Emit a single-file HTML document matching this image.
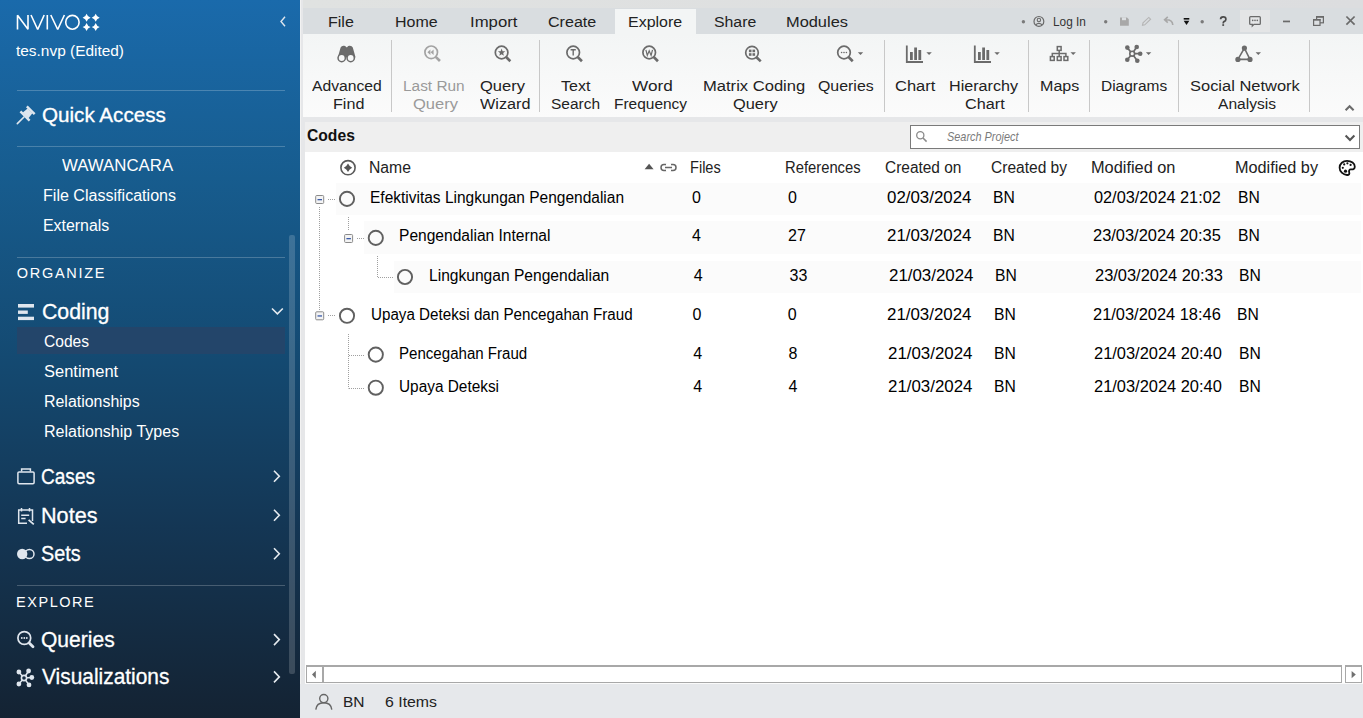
<!DOCTYPE html>
<html><head><meta charset="utf-8"><style>
html,body{margin:0;padding:0;width:1363px;height:718px;overflow:hidden;background:#e6e7e9;}
.t{position:absolute;white-space:nowrap;line-height:1;font-family:"Liberation Sans",sans-serif;transform-origin:0 0;}
.r{position:absolute;}
.s{position:absolute;overflow:visible;}
</style></head><body>
<div class="r" style="left:0px;top:0px;width:300px;height:718px;background:linear-gradient(180deg,#1a6aab 0px,#175c8e 178px,#144a72 355px,#143654 528px,#142435 705px,#142333 718px);"></div>
<div class="r" style="left:300px;top:0px;width:1063px;height:718px;background:#e6e7e9;"></div>
<div class="r" style="left:300px;top:0px;width:1px;height:718px;background:#f2f2f2;"></div>
<div class="r" style="left:303px;top:0px;width:1060px;height:8px;background:linear-gradient(90deg,#e0e2e1,#dcdddf);"></div>
<div class="r" style="left:303px;top:8px;width:1060px;height:26px;background:#d9dde0;"></div>
<div class="r" style="left:615px;top:9px;width:81px;height:25px;background:#f3f5f5;"></div>
<div class="r" style="left:1240px;top:10px;width:30px;height:22px;background:#e4e5e6;"></div>
<div class="r" style="left:303px;top:34px;width:1060px;height:83px;background:linear-gradient(180deg,#f3f5f5,#fbfbfb);"></div>
<div class="r" style="left:305px;top:122px;width:1058px;height:30px;background:#efefef;"></div>
<div class="r" style="left:305px;top:152px;width:1058px;height:513px;background:#ffffff;"></div>
<div class="r" style="left:17px;top:90px;width:268px;height:1px;background:rgba(255,255,255,0.22);"></div>
<div class="r" style="left:17px;top:146px;width:268px;height:1px;background:rgba(255,255,255,0.22);"></div>
<div class="r" style="left:17px;top:257px;width:268px;height:1px;background:rgba(255,255,255,0.22);"></div>
<div class="r" style="left:17px;top:585px;width:268px;height:1px;background:rgba(255,255,255,0.22);"></div>
<div class="r" style="left:17px;top:327px;width:268px;height:27px;background:#23456a;"></div>
<div class="r" style="left:289px;top:235px;width:6px;height:439px;background:rgba(255,255,255,0.17);border-radius:2px;"></div>
<div class="t" style="left:16.00px;top:44.32px;color:#ffffff;font-size:14.5px;transform:scaleX(1.0635);">tes.nvp (Edited)</div>
<div class="t" style="left:41.80px;top:106.29px;color:#ffffff;font-size:19.5px;transform:scaleX(1.0584);-webkit-text-stroke:0.3px #fff;">Quick Access</div>
<div class="t" style="left:61.80px;top:158.35px;color:#ffffff;font-size:16px;transform:scaleX(1.0508);">WAWANCARA</div>
<div class="t" style="left:43.00px;top:188.25px;color:#ffffff;font-size:16px;transform:scaleX(1.0042);">File Classifications</div>
<div class="t" style="left:43.00px;top:218.45px;color:#ffffff;font-size:16px;transform:scaleX(0.9928);">Externals</div>
<div class="t" style="left:16.80px;top:265.62px;color:#ffffff;font-size:14.5px;letter-spacing:1.705px;">ORGANIZE</div>
<div class="t" style="left:41.60px;top:301.80px;color:#ffffff;font-size:21.5px;transform:scaleX(0.9900);-webkit-text-stroke:0.3px #fff;">Coding</div>
<div class="t" style="left:43.60px;top:333.95px;color:#ffffff;font-size:16px;transform:scaleX(0.9737);">Codes</div>
<div class="t" style="left:43.60px;top:363.75px;color:#ffffff;font-size:16px;transform:scaleX(1.0299);">Sentiment</div>
<div class="t" style="left:43.60px;top:393.85px;color:#ffffff;font-size:16px;transform:scaleX(0.9953);">Relationships</div>
<div class="t" style="left:43.60px;top:423.65px;color:#ffffff;font-size:16px;transform:scaleX(1.0025);">Relationship Types</div>
<div class="t" style="left:41.40px;top:467.40px;color:#ffffff;font-size:21.5px;transform:scaleX(0.8863);-webkit-text-stroke:0.3px #fff;">Cases</div>
<div class="t" style="left:41.40px;top:505.60px;color:#ffffff;font-size:21.5px;transform:scaleX(1.0059);-webkit-text-stroke:0.3px #fff;">Notes</div>
<div class="t" style="left:41.40px;top:543.60px;color:#ffffff;font-size:21.5px;transform:scaleX(0.9223);-webkit-text-stroke:0.3px #fff;">Sets</div>
<div class="t" style="left:16.00px;top:595.42px;color:#ffffff;font-size:14.5px;letter-spacing:1.548px;">EXPLORE</div>
<div class="t" style="left:41.40px;top:630.40px;color:#ffffff;font-size:21.5px;transform:scaleX(0.9785);-webkit-text-stroke:0.3px #fff;">Queries</div>
<div class="t" style="left:42.40px;top:667.10px;color:#ffffff;font-size:21.5px;transform:scaleX(0.9723);-webkit-text-stroke:0.3px #fff;">Visualizations</div>
<svg class="s" style="left:0px;top:0px;" width="110" height="40" viewBox="0 0 110 40"><g fill="none" stroke="#fff" stroke-width="1.6" stroke-linejoin="bevel">
<path d="M17.5 29.5 V15.2 L28 29.2 V15"/>
<path d="M31 15 L37.7 29.5 L44.2 15"/>
<path d="M47.3 15 V29.5"/>
<path d="M50.8 15 L57.7 29.5 L64.4 15"/>
<ellipse cx="72.4" cy="22.3" rx="6.7" ry="6.9"/></g>
<g fill="#fff"><path d="M86.6 13.8 Q87.5 16.900000000000002 90.6 17.8 Q87.5 18.7 86.6 21.8 Q85.69999999999999 18.7 82.6 17.8 Q85.69999999999999 16.900000000000002 86.6 13.8Z"/><path d="M95.7 13.8 Q96.60000000000001 16.900000000000002 99.7 17.8 Q96.60000000000001 18.7 95.7 21.8 Q94.8 18.7 91.7 17.8 Q94.8 16.900000000000002 95.7 13.8Z"/><path d="M86.6 22.9 Q87.5 26.0 90.6 26.9 Q87.5 27.799999999999997 86.6 30.9 Q85.69999999999999 27.799999999999997 82.6 26.9 Q85.69999999999999 26.0 86.6 22.9Z"/><path d="M95.7 22.9 Q96.60000000000001 26.0 99.7 26.9 Q96.60000000000001 27.799999999999997 95.7 30.9 Q94.8 27.799999999999997 91.7 26.9 Q94.8 26.0 95.7 22.9Z"/></g></svg>
<svg class="s" style="left:270px;top:10px;" width="20" height="25" viewBox="0 0 20 25"><path d="M15 6.8 L11 11.5 L15 16.2" fill="none" stroke="#dfe6ee" stroke-width="1.4"/></svg>
<svg class="s" style="left:10px;top:100px;" width="30" height="30" viewBox="0 0 30 30"><g transform="translate(17,14) rotate(45)" fill="#dfe6ee">
<rect x="-5.5" y="-6.5" width="11" height="2.4"/>
<path d="M-3.4 -4.3 H3.4 L4 2 H-4Z"/>
<rect x="-6.5" y="1.6" width="13" height="2.4"/>
<rect x="-0.8" y="3.5" width="1.6" height="11" rx="0.8"/></g></svg>
<svg class="s" style="left:10px;top:298px;" width="30" height="28" viewBox="0 0 30 28"><g fill="#dfe6ee"><rect x="8" y="6" width="16" height="3.6"/><rect x="8" y="12.5" width="9.8" height="3.4"/><rect x="8" y="18.7" width="16" height="3.4"/></g></svg>
<svg class="s" style="left:265px;top:300px;" width="25" height="25" viewBox="0 0 25 25"><path d="M7 8.5 L12.4 13.8 L17.8 8.5" fill="none" stroke="#e6ebf0" stroke-width="1.6"/></svg>
<svg class="s" style="left:10px;top:462px;" width="30" height="30" viewBox="0 0 30 30"><g fill="none" stroke="#dfe6ee" stroke-width="1.5"><rect x="7.9" y="9.9" width="16.2" height="11.8" rx="1.2"/><path d="M11.6 9.6 V6.9 H20.4 V9.6"/></g></svg>
<svg class="s" style="left:10px;top:502px;" width="30" height="30" viewBox="0 0 30 30"><g fill="none" stroke="#dfe6ee" stroke-width="1.5"><path d="M22.5 19 V8 H8.7 V21.3 H17"/><path d="M11.5 6 V9.5 M19.5 6 V9.5"/><path d="M11.2 13.2 H19.2 M11.2 16.4 H15.6"/><path d="M18.6 17.8 L23.8 22.4" stroke-width="1.8"/></g></svg>
<svg class="s" style="left:10px;top:542px;" width="30" height="30" viewBox="0 0 30 30"><circle cx="19.4" cy="12" r="4.6" fill="none" stroke="#dfe6ee" stroke-width="1.5"/><circle cx="12.2" cy="12" r="5.2" fill="#dfe6ee"/></svg>
<svg class="s" style="left:10px;top:626px;" width="30" height="30" viewBox="0 0 30 30"><circle cx="14.3" cy="12" r="6.4" fill="none" stroke="#dfe6ee" stroke-width="1.7"/><path d="M19.2 17 L23 20.8" stroke="#dfe6ee" stroke-width="2.8" stroke-linecap="round"/><g fill="#dfe6ee"><circle cx="11.8" cy="12" r="0.9"/><circle cx="14.3" cy="12" r="0.9"/><circle cx="16.8" cy="12" r="0.9"/></g></svg>
<svg class="s" style="left:10px;top:662px;" width="30" height="30" viewBox="0 0 30 30"><g stroke="#dfe6ee" stroke-width="1.5" fill="none"><path d="M8.9 10 L14 16 M18.6 9 L14 16 M21.8 15.5 L14 16 M8.9 22 L14 16 M19 22.9 L14 16"/></g><circle cx="14" cy="16" r="2.6" fill="#142a40" stroke="#dfe6ee" stroke-width="1.6"/><g fill="#dfe6ee"><circle cx="8.9" cy="10" r="2.4"/><circle cx="18.6" cy="9" r="2.4"/><circle cx="21.8" cy="15.5" r="2.4"/><circle cx="8.9" cy="22" r="2.4"/><circle cx="19" cy="22.9" r="2.4"/></g></svg>
<svg class="s" style="left:265px;top:464px;" width="25" height="24" viewBox="0 0 25 24"><path d="M9 6.8 L14.3 12.3 L9 17.8" fill="none" stroke="#e6ebf0" stroke-width="1.6"/></svg>
<svg class="s" style="left:265px;top:503px;" width="25" height="24" viewBox="0 0 25 24"><path d="M9 6.8 L14.3 12.3 L9 17.8" fill="none" stroke="#e6ebf0" stroke-width="1.6"/></svg>
<svg class="s" style="left:265px;top:541px;" width="25" height="24" viewBox="0 0 25 24"><path d="M9 7.2 L14.3 12.7 L9 18.2" fill="none" stroke="#e6ebf0" stroke-width="1.6"/></svg>
<svg class="s" style="left:265px;top:627px;" width="25" height="24" viewBox="0 0 25 24"><path d="M9 7.1 L14.3 12.6 L9 18.1" fill="none" stroke="#e6ebf0" stroke-width="1.6"/></svg>
<svg class="s" style="left:265px;top:664px;" width="25" height="24" viewBox="0 0 25 24"><path d="M9 7.4 L14.3 12.9 L9 18.4" fill="none" stroke="#e6ebf0" stroke-width="1.6"/></svg>
<div class="t" style="left:327.50px;top:13.88px;color:#222222;font-size:15.5px;transform:scaleX(1.0345);">File</div>
<div class="t" style="left:395.40px;top:13.88px;color:#222222;font-size:15.5px;transform:scaleX(1.0304);">Home</div>
<div class="t" style="left:469.60px;top:13.88px;color:#222222;font-size:15.5px;transform:scaleX(1.0789);">Import</div>
<div class="t" style="left:548.20px;top:13.88px;color:#222222;font-size:15.5px;transform:scaleX(1.0378);">Create</div>
<div class="t" style="left:627.90px;top:13.88px;color:#222222;font-size:15.5px;transform:scaleX(1.0305);">Explore</div>
<div class="t" style="left:714.00px;top:13.88px;color:#222222;font-size:15.5px;transform:scaleX(1.0214);">Share</div>
<div class="t" style="left:785.90px;top:13.88px;color:#222222;font-size:15.5px;transform:scaleX(1.0571);">Modules</div>
<div class="t" style="left:1053.00px;top:16.22px;color:#333;font-size:12.5px;transform:scaleX(0.9467);">Log In</div>
<div class="t" style="left:311.80px;top:77.88px;color:#222222;font-size:15.5px;transform:scaleX(1.0125);">Advanced</div>
<div class="t" style="left:332.80px;top:96.38px;color:#222222;font-size:15.5px;transform:scaleX(1.0418);">Find</div>
<div class="t" style="left:403.20px;top:77.88px;color:#9a9a9a;font-size:15.5px;transform:scaleX(0.9935);">Last Run</div>
<div class="t" style="left:413.00px;top:96.38px;color:#9a9a9a;font-size:15.5px;transform:scaleX(1.0660);">Query</div>
<div class="t" style="left:480.40px;top:77.88px;color:#222222;font-size:15.5px;transform:scaleX(1.0660);">Query</div>
<div class="t" style="left:479.60px;top:96.38px;color:#222222;font-size:15.5px;transform:scaleX(1.0460);">Wizard</div>
<div class="t" style="left:560.60px;top:77.88px;color:#222222;font-size:15.5px;transform:scaleX(1.0344);">Text</div>
<div class="t" style="left:550.80px;top:96.38px;color:#222222;font-size:15.5px;transform:scaleX(0.9990);">Search</div>
<div class="t" style="left:631.60px;top:77.88px;color:#222222;font-size:15.5px;transform:scaleX(1.1069);">Word</div>
<div class="t" style="left:614.00px;top:96.38px;color:#222222;font-size:15.5px;transform:scaleX(0.9973);">Frequency</div>
<div class="t" style="left:703.00px;top:77.88px;color:#222222;font-size:15.5px;transform:scaleX(1.0691);">Matrix Coding</div>
<div class="t" style="left:733.40px;top:96.38px;color:#222222;font-size:15.5px;transform:scaleX(1.0568);">Query</div>
<div class="t" style="left:818.20px;top:77.88px;color:#222222;font-size:15.5px;transform:scaleX(1.0261);">Queries</div>
<div class="t" style="left:895.00px;top:77.88px;color:#222222;font-size:15.5px;transform:scaleX(1.0624);">Chart</div>
<div class="t" style="left:949.00px;top:77.88px;color:#222222;font-size:15.5px;transform:scaleX(1.0403);">Hierarchy</div>
<div class="t" style="left:965.40px;top:96.38px;color:#222222;font-size:15.5px;transform:scaleX(1.0460);">Chart</div>
<div class="t" style="left:1040.40px;top:77.88px;color:#222222;font-size:15.5px;transform:scaleX(1.0361);">Maps</div>
<div class="t" style="left:1101.00px;top:77.88px;color:#222222;font-size:15.5px;transform:scaleX(0.9985);">Diagrams</div>
<div class="t" style="left:1190.00px;top:77.88px;color:#222222;font-size:15.5px;transform:scaleX(1.0616);">Social Network</div>
<div class="t" style="left:1218.00px;top:96.38px;color:#222222;font-size:15.5px;transform:scaleX(1.0045);">Analysis</div>
<div class="r" style="left:391px;top:40px;width:1px;height:72px;background:#c8c8c8;"></div>
<div class="r" style="left:539px;top:40px;width:1px;height:72px;background:#c8c8c8;"></div>
<div class="r" style="left:884px;top:40px;width:1px;height:72px;background:#c8c8c8;"></div>
<div class="r" style="left:1028px;top:40px;width:1px;height:72px;background:#c8c8c8;"></div>
<div class="r" style="left:1089px;top:40px;width:1px;height:72px;background:#c8c8c8;"></div>
<div class="r" style="left:1178px;top:40px;width:1px;height:72px;background:#c8c8c8;"></div>
<div class="r" style="left:1309px;top:40px;width:1px;height:72px;background:#c8c8c8;"></div>
<svg class="s" style="left:0px;top:0px;" width="1363" height="120" viewBox="0 0 1363 120"><g fill="#6b6b6b"><path d="M337.8 57.5 L340.6 47.6 Q341.6 45.4 344 45.7 Q345.4 45.9 345.9 46.8 Q346.7 47.8 347.5 46.8 Q348 45.9 349.4 45.7 Q351.8 45.4 352.8 47.6 L355.6 57.5Z"/>
<circle cx="341.7" cy="58" r="4.4"/><circle cx="350.7" cy="58" r="4.4"/></g>
<g fill="#f6f7f7"><circle cx="341.7" cy="58" r="2.9"/><circle cx="350.7" cy="58" r="2.9"/></g><circle cx="431.2" cy="52.3" r="6.3" fill="none" stroke="#a3a3a3" stroke-width="1.7"/><path d="M435.74 56.84 L439.94 61.04" stroke="#a3a3a3" stroke-width="2.6" stroke-linecap="butt"/><path d="M427.4 52.3 L430.4 49.6 V55Z M430.6 52.3 L433.6 49.6 V55Z" fill="#a3a3a3"/><circle cx="501.6" cy="52.5" r="6.3" fill="none" stroke="#6b6b6b" stroke-width="1.7"/><path d="M506.14 57.04 L510.34 61.24" stroke="#6b6b6b" stroke-width="2.6" stroke-linecap="butt"/><path d="M501.6 48.6 L502.6 51.2 L505.3 51.3 L503.2 53 L503.9 55.7 L501.6 54.2 L499.3 55.7 L500 53 L497.9 51.3 L500.6 51.2Z" fill="#6b6b6b"/><circle cx="573.2" cy="52.5" r="6.3" fill="none" stroke="#6b6b6b" stroke-width="1.7"/><path d="M577.74 57.04 L581.94 61.24" stroke="#6b6b6b" stroke-width="2.6" stroke-linecap="butt"/><path d="M570.6 49.8 H575.8 M573.2 49.8 V55.6" stroke="#6b6b6b" stroke-width="1.4" fill="none"/><circle cx="649.2" cy="52.5" r="6.3" fill="none" stroke="#6b6b6b" stroke-width="1.7"/><path d="M653.74 57.04 L657.94 61.24" stroke="#6b6b6b" stroke-width="2.6" stroke-linecap="butt"/><path d="M645.9 49.8 L647.3 55.4 L649.2 50.8 L651.1 55.4 L652.5 49.8" stroke="#6b6b6b" stroke-width="1.2" fill="none"/><circle cx="752" cy="52.7" r="6.3" fill="none" stroke="#6b6b6b" stroke-width="1.7"/><path d="M756.54 57.24 L760.74 61.44" stroke="#6b6b6b" stroke-width="2.6" stroke-linecap="butt"/><g fill="#6b6b6b"><rect x="748.9" y="49.6" width="2.6" height="2.6"/><rect x="752.5" y="49.6" width="2.6" height="2.6"/><rect x="748.9" y="53.2" width="2.6" height="2.6"/><rect x="752.5" y="53.2" width="2.6" height="2.6"/></g><circle cx="844" cy="52.5" r="6.3" fill="none" stroke="#6b6b6b" stroke-width="1.7"/><path d="M848.54 57.04 L852.74 61.24" stroke="#6b6b6b" stroke-width="2.6" stroke-linecap="butt"/><g fill="#6b6b6b"><circle cx="841.6" cy="52.5" r="0.8"/><circle cx="844" cy="52.5" r="0.8"/><circle cx="846.4" cy="52.5" r="0.8"/></g><path d="M857.8 52.3 H863.1999999999999 L860.5 55.099999999999994Z" fill="#6b6b6b"/><path d="M906.8 45.5 V62 H923" fill="none" stroke="#6b6b6b" stroke-width="1.8"/><g fill="#6b6b6b"><rect x="910" y="52" width="2.8" height="8"/><rect x="914.2" y="47.5" width="2.8" height="12.5"/><rect x="918.4" y="50" width="2.8" height="10"/></g><path d="M926.4 52.3 H931.8 L929.1 55.099999999999994Z" fill="#6b6b6b"/><path d="M974.8 45.5 V62 H991" fill="none" stroke="#6b6b6b" stroke-width="1.8"/><g fill="#6b6b6b"><rect x="978" y="52" width="2.8" height="8"/><rect x="982.2" y="47.5" width="2.8" height="12.5"/><rect x="986.4" y="50" width="2.8" height="10"/></g><path d="M994.4 52.3 H999.8 L997.1 55.099999999999994Z" fill="#6b6b6b"/><g fill="none" stroke="#6b6b6b" stroke-width="1.5"><rect x="1057.3" y="46.6" width="3.8" height="3.8"/><rect x="1050.4" y="56.6" width="3.8" height="3.8"/><rect x="1057.3" y="56.6" width="3.8" height="3.8"/><rect x="1064" y="56.6" width="3.8" height="3.8"/>
<path d="M1059.2 50.4 V56.6 M1052.3 56.6 V53.5 H1065.9 V56.6"/></g><path d="M1070.5 52.2 H1075.9 L1073.2 55.0Z" fill="#6b6b6b"/><g stroke="#6b6b6b" stroke-width="1.7"><path d="M1127.3 47.6 L1132.2 53.7 M1136.7 47 L1132.2 53.7 M1140.2 53.7 L1132.2 53.7 M1127.3 59.7 L1132.2 53.7 M1137.3 60.7 L1132.2 53.7"/></g>
<g fill="#6b6b6b"><circle cx="1127.3" cy="47.6" r="2.3"/><circle cx="1136.7" cy="47" r="2.3"/><circle cx="1140.2" cy="53.7" r="2.3"/><circle cx="1127.3" cy="59.7" r="2.3"/><circle cx="1137.3" cy="60.7" r="2.3"/></g>
<circle cx="1132.2" cy="53.7" r="2.4" fill="#f6f7f7" stroke="#6b6b6b" stroke-width="1.6"/><path d="M1145.9 52.2 H1151.3000000000002 L1148.6000000000001 55.0Z" fill="#6b6b6b"/><path d="M1244.4 48.1 L1237.9 59.4 H1250Z" fill="none" stroke="#6b6b6b" stroke-width="1.6"/><g fill="#6b6b6b"><circle cx="1244.4" cy="48.1" r="2.6"/><circle cx="1237.9" cy="59.4" r="2.6"/><circle cx="1250" cy="59.4" r="2.6"/></g><path d="M1255.6 52.2 H1261.0 L1258.3 55.0Z" fill="#6b6b6b"/><path d="M1345.6 110.2 L1349.6 106.2 L1353.6 110.2" fill="none" stroke="#6b6b6b" stroke-width="2.1"/><g fill="#7a7a7a"><circle cx="1023.4" cy="21.7" r="1.7"/><circle cx="1105.7" cy="21.7" r="1.7"/><circle cx="1202.2" cy="21.7" r="1.7"/></g>
<circle cx="1038.9" cy="21.4" r="4.9" fill="none" stroke="#6a6a6a" stroke-width="1.2"/><circle cx="1038.9" cy="20" r="1.7" fill="none" stroke="#6a6a6a" stroke-width="1.1"/><path d="M1035.6 25 Q1038.9 21.8 1042.2 25" fill="none" stroke="#6a6a6a" stroke-width="1.1"/>
<path d="M1120 17.4 H1127 L1128.8 19.2 V25.8 H1120Z" fill="#a8a8a8"/><rect x="1122" y="17.4" width="4" height="2.8" fill="#dcdfe2"/>
<path d="M1142.5 25.3 L1143 22.8 L1148.8 17.4 L1150.6 19.2 L1144.8 24.8Z" fill="none" stroke="#b5b5b5" stroke-width="1.1"/>
<path d="M1172.8 25 Q1172.5 19.5 1165.5 19.8 M1167.8 16.9 L1164.6 19.8 L1167.8 22.6" fill="none" stroke="#a8a8a8" stroke-width="1.6"/>
<rect x="1183.7" y="18" width="5.6" height="1.6" fill="#111"/><path d="M1183.7 20.8 H1189.3 L1186.5 25Z" fill="#111"/>
<path d="M1220.6 19.3 Q1220.6 16.9 1223.2 16.9 Q1225.9 16.9 1225.9 19.2 Q1225.9 20.8 1224 21.6 Q1223.2 22 1223.2 23.4" fill="none" stroke="#4a4a4a" stroke-width="1.7"/><rect x="1222.3" y="24.2" width="1.8" height="1.7" fill="#4a4a4a"/>
<path d="M1250.6 16.6 H1259.4 Q1260.3 16.6 1260.3 17.5 V23.4 Q1260.3 24.3 1259.4 24.3 H1254 L1252.3 26 V24.3 H1250.6 Q1249.7 24.3 1249.7 23.4 V17.5 Q1249.7 16.6 1250.6 16.6Z" fill="none" stroke="#6a6a6a" stroke-width="1.3"/>
<g fill="#6a6a6a"><circle cx="1252.7" cy="20.4" r="0.8"/><circle cx="1255" cy="20.4" r="0.8"/><circle cx="1257.3" cy="20.4" r="0.8"/></g>
<rect x="1283" y="20.6" width="7" height="1.7" fill="#6a6a6a"/>
<g fill="none" stroke="#6a6a6a" stroke-width="1.2"><rect x="1316.6" y="16.7" width="6.8" height="6.1"/><rect x="1313.6" y="19.6" width="6.4" height="5.8" fill="#dcdfe2"/></g><rect x="1316" y="16.1" width="8" height="1.6" fill="#6a6a6a"/><rect x="1313" y="19" width="7.6" height="1.6" fill="#6a6a6a"/>
<path d="M1346.4 16.5 L1354.6 24.7 M1354.6 16.5 L1346.4 24.7" stroke="#6a6a6a" stroke-width="1.7"/></svg>
<div class="t" style="left:307.20px;top:127.58px;color:#111;font-size:16.8px;font-weight:700;transform:scaleX(0.9326);">Codes</div>
<div class="r" style="left:910px;top:125px;width:450px;height:24px;background:#ffffff;box-sizing:border-box;border:1px solid #7a7a7a;"></div>
<div class="t" style="left:946.80px;top:130.19px;color:#7a7a7a;font-size:13px;font-style:italic;transform:scaleX(0.8378);">Search Project</div>
<div class="t" style="left:369.00px;top:160.45px;color:#222222;font-size:16px;transform:scaleX(0.9837);">Name</div>
<div class="t" style="left:689.60px;top:160.45px;color:#222222;font-size:16px;transform:scaleX(0.9100);">Files</div>
<div class="t" style="left:785.20px;top:160.45px;color:#222222;font-size:16px;transform:scaleX(0.9243);">References</div>
<div class="t" style="left:885.00px;top:160.45px;color:#222222;font-size:16px;transform:scaleX(0.9652);">Created on</div>
<div class="t" style="left:990.80px;top:160.45px;color:#222222;font-size:16px;transform:scaleX(0.9715);">Created by</div>
<div class="t" style="left:1091.20px;top:160.45px;color:#222222;font-size:16px;transform:scaleX(1.0208);">Modified on</div>
<div class="t" style="left:1235.00px;top:160.45px;color:#222222;font-size:16px;transform:scaleX(1.0143);">Modified by</div>
<div class="r" style="left:336px;top:183px;width:1025px;height:32px;background:#fbfbfb;"></div>
<div class="r" style="left:364px;top:221px;width:997px;height:33px;background:#fbfbfb;"></div>
<div class="r" style="left:394px;top:261px;width:967px;height:32px;background:#fbfbfb;"></div>
<div class="t" style="left:370.20px;top:190.25px;color:#000;font-size:16px;transform:scaleX(0.9680);">Efektivitas Lingkungan Pengendalian</div>
<div class="t" style="left:692.00px;top:190.25px;color:#000;font-size:16px;">0</div>
<div class="t" style="left:788.00px;top:190.25px;color:#000;font-size:16px;">0</div>
<div class="t" style="left:886.80px;top:190.25px;color:#000;font-size:16px;transform:scaleX(1.0544);">02/03/2024</div>
<div class="t" style="left:993.00px;top:190.25px;color:#000;font-size:16px;transform:scaleX(0.9796);">BN</div>
<div class="t" style="left:1093.80px;top:190.25px;color:#000;font-size:16px;transform:scaleX(1.0181);">02/03/2024 21:02</div>
<div class="t" style="left:1238.00px;top:190.25px;color:#000;font-size:16px;transform:scaleX(0.9796);">BN</div>
<div class="t" style="left:399.00px;top:227.95px;color:#000;font-size:16px;transform:scaleX(0.9727);">Pengendalian Internal</div>
<div class="t" style="left:692.00px;top:227.95px;color:#000;font-size:16px;">4</div>
<div class="t" style="left:788.00px;top:227.95px;color:#000;font-size:16px;">27</div>
<div class="t" style="left:887.00px;top:227.95px;color:#000;font-size:16px;transform:scaleX(1.0544);">21/03/2024</div>
<div class="t" style="left:993.00px;top:227.95px;color:#000;font-size:16px;transform:scaleX(0.9796);">BN</div>
<div class="t" style="left:1092.80px;top:227.95px;color:#000;font-size:16px;transform:scaleX(1.0262);">23/03/2024 20:35</div>
<div class="t" style="left:1238.00px;top:227.95px;color:#000;font-size:16px;transform:scaleX(0.9796);">BN</div>
<div class="t" style="left:429.00px;top:268.15px;color:#000;font-size:16px;transform:scaleX(0.9740);">Lingkungan Pengendalian</div>
<div class="t" style="left:693.80px;top:268.15px;color:#000;font-size:16px;">4</div>
<div class="t" style="left:789.60px;top:268.15px;color:#000;font-size:16px;">33</div>
<div class="t" style="left:889.00px;top:268.15px;color:#000;font-size:16px;transform:scaleX(1.0544);">21/03/2024</div>
<div class="t" style="left:994.80px;top:268.15px;color:#000;font-size:16px;transform:scaleX(0.9796);">BN</div>
<div class="t" style="left:1095.20px;top:268.15px;color:#000;font-size:16px;transform:scaleX(1.0262);">23/03/2024 20:33</div>
<div class="t" style="left:1239.40px;top:268.15px;color:#000;font-size:16px;transform:scaleX(0.9796);">BN</div>
<div class="t" style="left:371.00px;top:306.55px;color:#000;font-size:16px;transform:scaleX(0.9487);">Upaya Deteksi dan Pencegahan Fraud</div>
<div class="t" style="left:692.40px;top:306.55px;color:#000;font-size:16px;">0</div>
<div class="t" style="left:787.80px;top:306.55px;color:#000;font-size:16px;">0</div>
<div class="t" style="left:887.20px;top:306.55px;color:#000;font-size:16px;transform:scaleX(1.0544);">21/03/2024</div>
<div class="t" style="left:993.80px;top:306.55px;color:#000;font-size:16px;transform:scaleX(0.9796);">BN</div>
<div class="t" style="left:1093.20px;top:306.55px;color:#000;font-size:16px;transform:scaleX(1.0262);">21/03/2024 18:46</div>
<div class="t" style="left:1237.40px;top:306.55px;color:#000;font-size:16px;transform:scaleX(0.9796);">BN</div>
<div class="t" style="left:399.20px;top:346.45px;color:#000;font-size:16px;transform:scaleX(0.9423);">Pencegahan Fraud</div>
<div class="t" style="left:693.20px;top:346.45px;color:#000;font-size:16px;">4</div>
<div class="t" style="left:788.60px;top:346.45px;color:#000;font-size:16px;">8</div>
<div class="t" style="left:888.00px;top:346.45px;color:#000;font-size:16px;transform:scaleX(1.0544);">21/03/2024</div>
<div class="t" style="left:994.40px;top:346.45px;color:#000;font-size:16px;transform:scaleX(0.9796);">BN</div>
<div class="t" style="left:1094.00px;top:346.45px;color:#000;font-size:16px;transform:scaleX(1.0262);">21/03/2024 20:40</div>
<div class="t" style="left:1238.60px;top:346.45px;color:#000;font-size:16px;transform:scaleX(0.9796);">BN</div>
<div class="t" style="left:399.20px;top:378.55px;color:#000;font-size:16px;transform:scaleX(0.9612);">Upaya Deteksi</div>
<div class="t" style="left:693.20px;top:378.55px;color:#000;font-size:16px;">4</div>
<div class="t" style="left:788.60px;top:378.55px;color:#000;font-size:16px;">4</div>
<div class="t" style="left:888.00px;top:378.55px;color:#000;font-size:16px;transform:scaleX(1.0544);">21/03/2024</div>
<div class="t" style="left:994.40px;top:378.55px;color:#000;font-size:16px;transform:scaleX(0.9796);">BN</div>
<div class="t" style="left:1094.00px;top:378.55px;color:#000;font-size:16px;transform:scaleX(1.0262);">21/03/2024 20:40</div>
<div class="t" style="left:1238.60px;top:378.55px;color:#000;font-size:16px;transform:scaleX(0.9796);">BN</div>
<svg class="s" style="left:0px;top:0px;" width="1363" height="400" viewBox="0 0 1363 400"><circle cx="920.3" cy="135.3" r="3.6" fill="none" stroke="#8a8a8a" stroke-width="1.3"/><path d="M923 138 L926.6 141.6" stroke="#8a8a8a" stroke-width="1.5"/><path d="M1345.6 135.6 L1350 140 L1354.4 135.6" fill="none" stroke="#555" stroke-width="2.1"/><circle cx="348" cy="167.7" r="7.1" fill="none" stroke="#5a5a5a" stroke-width="1.6"/><path d="M348 163.5 Q349.3 166.39999999999998 352.2 167.7 Q349.3 169.0 348 171.89999999999998 Q346.7 169.0 343.8 167.7 Q346.7 166.39999999999998 348 163.5Z" fill="#555"/><path d="M644.6 169.3 L649.1 163.8 L653.6 169.3Z" fill="#555"/><g fill="none" stroke="#666" stroke-width="1.5"><rect x="661" y="164.5" width="7.5" height="6" rx="3"/><rect x="668.5" y="164.5" width="7.5" height="6" rx="3"/></g><rect x="666" y="163.5" width="5" height="8" fill="#fff"/><path d="M665 167.5 H672" stroke="#666" stroke-width="1.5"/><path d="M1347 160.8 C1351.5 160.8 1354.8 163.5 1354.8 166.8 C1354.8 168.8 1353.2 169.6 1351.2 169.4 C1349.4 169.2 1348.6 170.6 1349.2 172.2 C1349.8 174 1348.8 175.2 1347 175 C1343 174.8 1339.6 171.5 1339.6 167.7 C1339.6 163.8 1343 160.8 1347 160.8Z" fill="none" stroke="#111" stroke-width="1.8"/><g fill="#111"><circle cx="1342.8" cy="167.8" r="1.1"/><circle cx="1344.2" cy="164.4" r="1.1"/><circle cx="1347.4" cy="163.3" r="1.1"/><circle cx="1350.6" cy="164.9" r="1.1"/><circle cx="1345.5" cy="171.2" r="1.6"/></g><circle cx="347" cy="198.9" r="7.1" fill="none" stroke="#606060" stroke-width="1.9"/><circle cx="375.8" cy="237.9" r="7.1" fill="none" stroke="#606060" stroke-width="1.9"/><circle cx="405" cy="277" r="7.1" fill="none" stroke="#606060" stroke-width="1.9"/><circle cx="347" cy="315.8" r="7.1" fill="none" stroke="#606060" stroke-width="1.9"/><circle cx="375.8" cy="354.6" r="7.1" fill="none" stroke="#606060" stroke-width="1.9"/><circle cx="375.8" cy="387.7" r="7.1" fill="none" stroke="#606060" stroke-width="1.9"/><rect x="315.7" y="195.5" width="8" height="8" rx="1" fill="#f4f4f4" stroke="#8a8a8a" stroke-width="1"/><rect x="317.5" y="199" width="4.5" height="1.3" fill="#3a5aa8"/><rect x="344.6" y="234.5" width="8" height="8" rx="1" fill="#f4f4f4" stroke="#8a8a8a" stroke-width="1"/><rect x="346.40000000000003" y="238" width="4.5" height="1.3" fill="#3a5aa8"/><rect x="315.7" y="311.8" width="8" height="8" rx="1" fill="#f4f4f4" stroke="#8a8a8a" stroke-width="1"/><rect x="317.5" y="315.3" width="4.5" height="1.3" fill="#3a5aa8"/><path d="M328 199.5 H335 M319.5 207 V311 M348.5 217 V230 M357 238.5 H364 M377.5 256 V277.5 H394 M328 315.5 H335 M348.5 334 V388.5 M349 355.5 H364 M349 388.5 H364" stroke="#a0a0a0" stroke-width="1" stroke-dasharray="1 1" fill="none"/></svg>
<div class="r" style="left:305px;top:665px;width:1058px;height:19px;background:#ffffff;"></div>
<div class="r" style="left:322px;top:665px;width:1020px;height:18px;background:#ffffff;box-sizing:border-box;border:1px solid #a8a8a8;border-top:2px solid #a8a8a8;border-left:2px solid #a8a8a8;"></div>
<div class="r" style="left:306px;top:665px;width:17px;height:18px;background:#ffffff;box-sizing:border-box;border:1px solid #a8a8a8;border-top:2px solid #a8a8a8;"></div>
<div class="r" style="left:1345px;top:665px;width:17px;height:18px;background:#ffffff;box-sizing:border-box;border:1px solid #a8a8a8;border-top:2px solid #a8a8a8;"></div>
<div class="r" style="left:305px;top:683px;width:1058px;height:1px;background:#fafafa;"></div>
<div class="r" style="left:300px;top:684px;width:1063px;height:34px;background:#e6e8eb;"></div>
<svg class="s" style="left:300px;top:640px;" width="200" height="78" viewBox="0 0 200 78"><circle cx="23.8" cy="58.6" r="4.1" fill="none" stroke="#666" stroke-width="1.4"/><path d="M15.8 69.6 Q16.6 62.8 23.8 62.8 Q31 62.8 31.8 69.6" fill="none" stroke="#666" stroke-width="1.4"/><path d="M15.8 30.8 L12 34.6 L15.8 38.4Z" fill="#707070"/></svg>
<svg class="s" style="left:1300px;top:640px;" width="63" height="50" viewBox="0 0 63 50"><path d="M51.6 31 L55.8 34.6 L51.6 38.2Z" fill="#707070"/></svg>
<div class="t" style="left:343.00px;top:694.38px;color:#222222;font-size:15.5px;transform:scaleX(0.9999);">BN</div>
<div class="t" style="left:384.50px;top:694.38px;color:#222222;font-size:15.5px;transform:scaleX(1.0232);">6 Items</div>
</body></html>
